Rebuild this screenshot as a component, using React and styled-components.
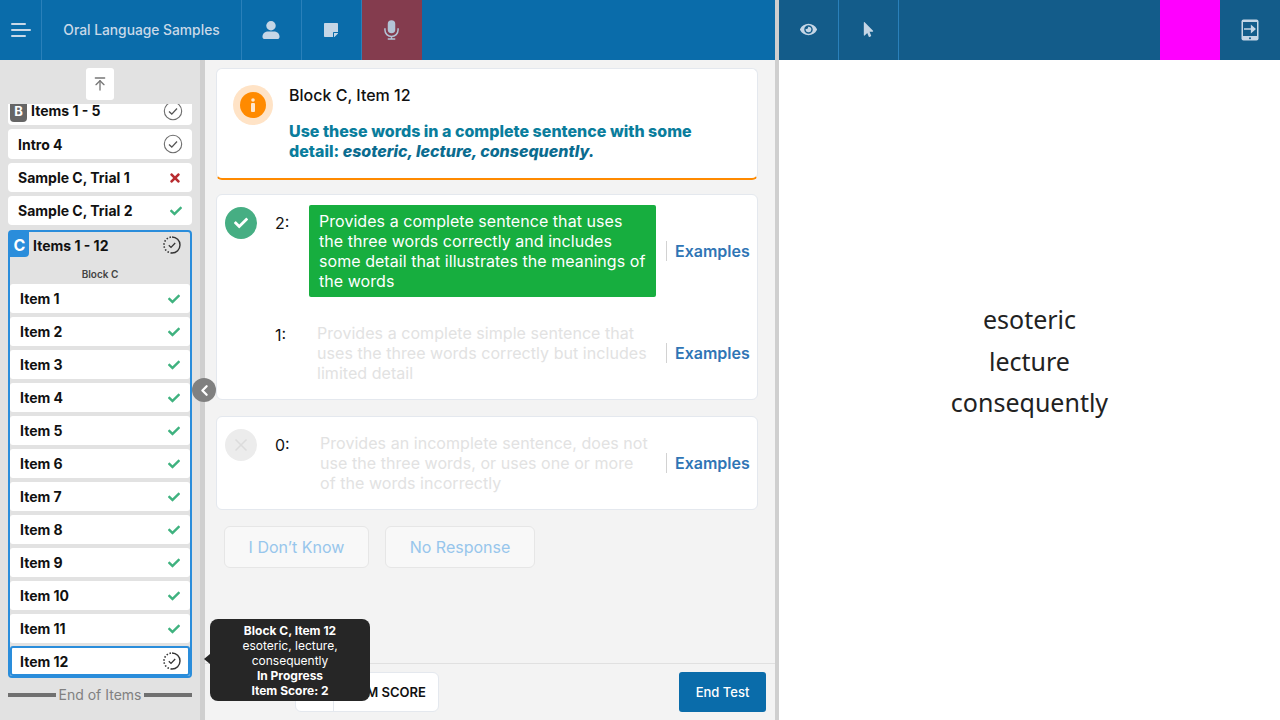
import styled, { createGlobalStyle } from "styled-components";
import { FaEye, FaMousePointer, FaStickyNote, FaCheck, FaTimes } from "react-icons/fa";
import { LuArrowUpToLine, LuChevronLeft, LuX } from "react-icons/lu";

const GlobalStyle = createGlobalStyle`
  html, body {
    margin: 0;
    height: 100%;
    overflow: hidden;
    font-family: "Inter", "Liberation Sans", sans-serif;
  }
  * { box-sizing: border-box; }
`;

const items = ["Item 1", "Item 2", "Item 3", "Item 4", "Item 5", "Item 6", "Item 7", "Item 8", "Item 9", "Item 10", "Item 11"];

const MenuIcon = () => (
  <svg width="20" height="14" viewBox="0 0 20 14" fill="#c9d9e8">
    <rect x="0" y="0" width="15" height="2" rx="1" />
    <rect x="0" y="6" width="20" height="2" rx="1" />
    <rect x="0" y="12" width="15" height="2" rx="1" />
  </svg>
);

const UserIcon = () => (
  <svg width="18" height="18" viewBox="0 0 18 19" fill="#c5d6e6">
    <circle cx="9" cy="5" r="5" />
    <path d="M0 16.5C0 13 3 11 6 11h6c3 0 6 2 6 5.500c0 1.500-1 2.500-2.500 2.500h-13C1 19 0 18 0 16.500z" />
  </svg>
);

const MicIcon = () => (
  <svg width="15" height="20" viewBox="0 0 16 21" fill="none" stroke="#b3c4d6" strokeWidth="1.6">
    <rect x="4" y="0" width="8" height="14" rx="4" fill="#b3c4d6" stroke="none" />
    <path d="M1 8.500v2a7 7 0 0 0 14 0v-2M8 17.500V20M4 20.200h8" />
  </svg>
);

const TabletIcon = () => (
  <svg width="18" height="22" viewBox="0 0 18 22">
    <rect x="0.500" y="0.500" width="17" height="21" rx="2" fill="#c5d6e6" />
    <rect x="2" y="3" width="14" height="14" fill="#135c8a" />
    <circle cx="9" cy="19.300" r="1" fill="#135c8a" />
    <path d="M3 10h10M10.500 7l3.500 3-3.500 3z" stroke="#c5d6e6" strokeWidth="1.300" fill="#c5d6e6" />
  </svg>
);

const InfoGlyph = () => (
  <svg width="6" height="14" viewBox="0 0 6 14" fill="#ffe6cc">
    <circle cx="3" cy="2" r="1.800" />
    <rect x="1" y="5" width="4" height="9" rx="1" />
  </svg>
);

const DoneIcon = () => (
  <svg width="20" height="20" viewBox="0 0 20 20" fill="none">
    <circle cx="10" cy="10" r="8.700" stroke="#6d6d6d" strokeWidth="1.100" />
    <path d="M6 10.500l2.800 2.600L14 7.500" stroke="#555" strokeWidth="1.300" />
  </svg>
);

const ProgressIcon = () => (
  <svg width="18" height="18" viewBox="0 0 18 18" fill="none">
    <path d="M9 1a8 8 0 0 1 0 16" stroke="#333" strokeWidth="1.400" />
    <path d="M9 17a8 8 0 0 1 0-16" stroke="#333" strokeWidth="1.600" strokeDasharray="1.500 1.700" />
    <path d="M5.800 9.300l2.200 2.100 4.200-4.400" stroke="#333" strokeWidth="1.300" />
  </svg>
);

const Status = ({ kind }) => {
  if (kind === "done") return <DoneIcon />;
  if (kind === "progress") return <ProgressIcon />;
  if (kind === "wrong") return <WrongMark><FaTimes /></WrongMark>;
  return <RightMark><FaCheck /></RightMark>;
};

const App = () => (
  <>
    <GlobalStyle />
    <Page>
      <LeftPane>
        <TopBar>
          <BarCell $width={42}><MenuIcon /></BarCell>
          <TitleCell>Oral Language Samples</TitleCell>
          <BarCell $width={60}><UserIcon /></BarCell>
          <BarCell $width={60}><FaStickyNote size={16} color="#c5d6e6" /></BarCell>
          <MicCell><MicIcon /></MicCell>
        </TopBar>
        <Body>
          <Sidebar>
            <ToTop><LuArrowUpToLine size={16} color="#777" /></ToTop>
            <ListClip>
              <BlockRow>
                <BlockBadge>B</BlockBadge>
                <span>Items 1 - 5</span>
                <StatusSlot><Status kind="done" /></StatusSlot>
              </BlockRow>
              <Row $height={30}>Intro 4<StatusSlot><Status kind="done" /></StatusSlot></Row>
              <Row>Sample C, Trial 1<StatusSlot><Status kind="wrong" /></StatusSlot></Row>
              <Row>Sample C, Trial 2<StatusSlot><Status kind="right" /></StatusSlot></Row>
              <Group>
                <GroupHead>
                  <GroupBadge>C</GroupBadge>
                  <span>Items 1 - 12</span>
                  <StatusSlot><Status kind="progress" /></StatusSlot>
                </GroupHead>
                <GroupLabel>Block C</GroupLabel>
                {items.map((name) => (
                  <ItemRow key={name}>{name}<StatusSlot><Status kind="right" /></StatusSlot></ItemRow>
                ))}
                <ItemRow $active>Item 12<StatusSlot $right={7}><Status kind="progress" /></StatusSlot></ItemRow>
              </Group>
            </ListClip>
            <EndOfItems>End of Items</EndOfItems>
          </Sidebar>
          <Main>
            <Scroll>
              <PromptCard>
                <InfoHalo><InfoDot><InfoGlyph /></InfoDot></InfoHalo>
                <div>
                  <PromptTitle>Block C, Item 12</PromptTitle>
                  <PromptText>
                    Use these words in a complete sentence with some detail: <em>esoteric, lecture, consequently.</em>
                  </PromptText>
                </div>
              </PromptCard>
              <ScoreCard>
                <ScoreRow>
                  <ScoreDot $on><FaCheck size={14} color="#fff" /></ScoreDot>
                  <ScoreNum>2:</ScoreNum>
                  <Criterion $selected>
                    Provides a complete sentence that uses the three words correctly and includes some detail that illustrates the meanings of the words
                  </Criterion>
                  <Examples>Examples</Examples>
                </ScoreRow>
                <ScoreRow $gap={20}>
                  <DotSpace />
                  <ScoreNum>1:</ScoreNum>
                  <Criterion $indent={8}>
                    Provides a complete simple sentence that uses the three words correctly but includes limited detail
                  </Criterion>
                  <Examples>Examples</Examples>
                </ScoreRow>
              </ScoreCard>
              <ScoreCard>
                <ScoreRow>
                  <ScoreDot><LuX size={20} color="#dcdcdc" /></ScoreDot>
                  <ScoreNum>0:</ScoreNum>
                  <Criterion $indent={11}>
                    Provides an incomplete sentence, does not use the three words, or uses one or more of the words incorrectly
                  </Criterion>
                  <Examples>Examples</Examples>
                </ScoreRow>
              </ScoreCard>
              <GhostButtons>
                <GhostButton $width={145}>I Don’t Know</GhostButton>
                <GhostButton $width={150}>No Response</GhostButton>
              </GhostButtons>
            </Scroll>
            <Footer>
              <ScoreBox>
                <ScoreValue />
                <ScoreName>ITEM SCORE</ScoreName>
              </ScoreBox>
              <EndTest>End Test</EndTest>
            </Footer>
          </Main>
          <Collapse><LuChevronLeft size={17} strokeWidth={3.2} color="#fff" /></Collapse>
          <Tooltip>
            <b>Block C, Item 12</b>
            <br />
            esoteric, lecture,
            <br />
            consequently
            <br />
            <b>In Progress</b>
            <br />
            <b>Item Score: 2</b>
          </Tooltip>
        </Body>
      </LeftPane>
      <RightPane>
        <RightBar>
          <RightCell><FaEye size={17} color="#c5d6e6" /></RightCell>
          <RightCell><FaMousePointer size={15} color="#c5d6e6" /></RightCell>
          <Spring />
          <Swatch />
          <TabletCell><TabletIcon /></TabletCell>
        </RightBar>
        <Words>
          <div>esoteric</div>
          <div>lecture</div>
          <div>consequently</div>
        </Words>
      </RightPane>
    </Page>
  </>
);

const Page = styled.div`
  display: flex;
  width: 1280px;
  height: 720px;
  background: #fff;
`;

const LeftPane = styled.div`
  flex: none;
  width: 775px;
  display: flex;
  flex-direction: column;
`;

const TopBar = styled.div`
  display: flex;
  height: 60px;
  background: #0a6caa;
`;

const BarCell = styled.div`
  width: ${(p) => p.$width}px;
  display: flex;
  align-items: center;
  justify-content: center;
  padding-right: ${(p) => (p.$width > 42 ? 1 : 0)}px;
  border-right: 1px solid #2a80ba;
`;

const TitleCell = styled.div`
  width: 200px;
  display: flex;
  align-items: center;
  justify-content: center;
  color: #c9d9e8;
  font-size: 13.800px;
  font-weight: 500;
  border-right: 1px solid #2a80ba;
`;

const MicCell = styled.div`
  width: 60px;
  display: flex;
  align-items: center;
  justify-content: center;
  padding-right: 1px;
  background: #843c4e;
`;

const Body = styled.div`
  position: relative;
  flex: 1;
  display: flex;
  min-height: 0;
`;

const Sidebar = styled.div`
  flex: none;
  width: 205px;
  padding: 8px 8px 0 8px;
  background: #e2e2e2;
  border-right: 5px solid #cfcfcf;
  display: flex;
  flex-direction: column;
`;

const ToTop = styled.div`
  align-self: center;
  flex: none;
  width: 28px;
  height: 32px;
  display: flex;
  align-items: center;
  justify-content: center;
  background: #fff;
  border-radius: 3px;
`;

const ListClip = styled.div`
  height: 574px;
  margin-top: 4px;
  overflow: hidden;
  display: flex;
  flex-direction: column;
  gap: 4px;
`;

const Row = styled.div`
  position: relative;
  flex: none;
  height: ${(p) => p.$height || 29}px;
  display: flex;
  align-items: center;
  padding-left: 10px;
  background: #fff;
  border-radius: 4px;
  color: #111;
  font-size: 14px;
  font-weight: 700;
`;

const BlockRow = styled(Row)`
  margin-top: -8px;
  padding-left: 23px;
`;

const BlockBadge = styled.div`
  position: absolute;
  left: 2px;
  top: 0;
  width: 17px;
  height: 26px;
  padding-top: 3px;
  display: flex;
  align-items: center;
  justify-content: center;
  background: #666;
  border-radius: 0 0 4px 4px;
  color: #fff;
  font-size: 13px;
  font-weight: 700;
`;

const StatusSlot = styled.div`
  position: absolute;
  right: ${(p) => p.$right ?? 9}px;
  top: 50%;
  transform: translateY(-50%);
  display: flex;
`;

const RightMark = styled.span`
  display: flex;
  margin-right: 1px;
  color: #3fb27f;
  font-size: 12px;
`;

const WrongMark = styled.span`
  display: flex;
  margin-right: 1px;
  color: #b82c30;
  font-size: 14px;
`;

const Group = styled.div`
  flex: none;
  margin-top: 1px;
  height: 448px;
  border: 2px solid #2a8ddb;
  border-radius: 4px;
`;

const GroupHead = styled.div`
  position: relative;
  height: 26px;
  display: flex;
  align-items: center;
  padding-left: 23px;
  color: #111;
  font-size: 14px;
  font-weight: 700;
`;

const GroupBadge = styled.div`
  position: absolute;
  left: 0;
  top: 0;
  width: 19px;
  height: 25px;
  display: flex;
  align-items: center;
  justify-content: center;
  background: #2a8ddb;
  border-radius: 0 0 4px 0;
  color: #fff;
  font-size: 16px;
  font-weight: 700;
`;

const GroupLabel = styled.div`
  height: 26px;
  padding-top: 10px;
  text-align: center;
  color: #444;
  font-size: 10px;
  font-weight: 600;
`;

const ItemRow = styled.div`
  position: relative;
  height: ${(p) => (p.$active ? 30 : 29)}px;
  margin-bottom: 4px;
  margin-top: ${(p) => (p.$active ? -1 : 0)}px;
  display: flex;
  align-items: center;
  padding-left: ${(p) => (p.$active ? 8 : 10)}px;
  background: #fff;
  border: ${(p) => (p.$active ? "2px solid #2a8ddb" : "none")};
  border-radius: 3px;
  color: #111;
  font-size: 14px;
  font-weight: 700;
`;

const EndOfItems = styled.div`
  margin-top: 8px;
  display: flex;
  align-items: center;
  gap: 3px;
  color: #808080;
  font-size: 14px;
  white-space: nowrap;
  &::before, &::after {
    content: "";
    flex: 1;
    height: 4px;
    background: #707070;
  }
`;

const Main = styled.div`
  flex: 1;
  min-width: 0;
  display: flex;
  flex-direction: column;
  background: #f3f3f3;
`;

const Scroll = styled.div`
  flex: 1;
  padding: 8px 17px 0 11px;
`;

const PromptCard = styled.div`
  height: 112px;
  display: flex;
  gap: 16px;
  padding: 16px 48px 0 16px;
  background: #fff;
  border: 1px solid #e4e8ee;
  border-bottom: 2px solid #ff8a00;
  border-radius: 6px;
`;

const InfoHalo = styled.div`
  flex: none;
  width: 40px;
  height: 40px;
  display: flex;
  align-items: center;
  justify-content: center;
  background: #ffe3c6;
  border-radius: 50%;
`;

const InfoDot = styled.div`
  width: 26px;
  height: 26px;
  display: flex;
  align-items: center;
  justify-content: center;
  background: #ff8a00;
  border-radius: 50%;
`;

const PromptTitle = styled.div`
  color: #111;
  font-size: 16px;
  font-weight: 500;
  line-height: 20px;
`;

const PromptText = styled.div`
  margin-top: 16px;
  color: #0a7d9c;
  font-size: 16px;
  font-weight: 800;
  line-height: 20px;
  em { color: #0b6c8f; }
`;

const ScoreCard = styled.div`
  margin-top: 14px;
  padding: 10px 8px;
  background: #fff;
  border: 1px solid #e4e8ee;
  border-radius: 6px;
  & + & { margin-top: 16px; }
`;

const ScoreRow = styled.div`
  display: flex;
  align-items: flex-start;
  margin-top: ${(p) => p.$gap || 0}px;
`;

const ScoreDot = styled.div`
  flex: none;
  width: 32px;
  height: 32px;
  margin-top: 2px;
  display: flex;
  align-items: center;
  justify-content: center;
  background: ${(p) => (p.$on ? "#46ae83" : "#ececec")};
  border-radius: 50%;
`;

const DotSpace = styled.div`
  flex: none;
  width: 32px;
`;

const ScoreNum = styled.div`
  flex: none;
  width: 34px;
  margin-left: 18px;
  margin-top: 8px;
  color: #111;
  font-size: 16px;
  line-height: 20px;
`;

const Criterion = styled.div`
  flex: none;
  width: ${(p) => 347 - (p.$indent || 0)}px;
  margin-left: ${(p) => p.$indent || 0}px;
  padding: 6px 8px 6px ${(p) => (p.$selected ? 10 : 0)}px;
  background: ${(p) => (p.$selected ? "#17ae3f" : "transparent")};
  border-radius: 2px;
  color: ${(p) => (p.$selected ? "#fff" : "#e2e2e2")};
  font-size: 16px;
  letter-spacing: 0.050px;
  line-height: 20px;
`;

const Examples = styled.div`
  align-self: center;
  flex: none;
  margin-left: 10px;
  padding-left: 8px;
  border-left: 1px solid #d2d2d2;
  color: #2f75b5;
  font-size: 16px;
  font-weight: 600;
  line-height: 20px;
`;

const GhostButtons = styled.div`
  display: flex;
  gap: 16px;
  margin: 16px 0 0 8px;
`;

const GhostButton = styled.div`
  width: ${(p) => p.$width}px;
  height: 42px;
  display: flex;
  align-items: center;
  justify-content: center;
  background: #f8f8f8;
  border: 1px solid #e6e6e6;
  border-radius: 6px;
  color: #97c6ec;
  font-size: 16px;
`;

const Footer = styled.div`
  flex: none;
  height: 57px;
  display: flex;
  align-items: flex-start;
  justify-content: space-between;
  padding: 8px 9px 0 90px;
  border-top: 1px solid #e0e0e0;
`;

const ScoreBox = styled.div`
  width: 144px;
  height: 40px;
  display: flex;
  background: #fff;
  border: 1px solid #e4e8ee;
  border-radius: 6px;
`;

const ScoreValue = styled.div`
  width: 38px;
  border-right: 1px solid #e4e8ee;
`;

const ScoreName = styled.div`
  flex: 1;
  display: flex;
  align-items: center;
  justify-content: center;
  color: #111;
  font-size: 13px;
  font-weight: 600;
`;

const EndTest = styled.div`
  width: 87px;
  height: 40px;
  display: flex;
  align-items: center;
  justify-content: center;
  background: #0a6caa;
  border-radius: 3px;
  color: #fff;
  font-size: 13px;
  font-weight: 500;
`;

const Collapse = styled.div`
  position: absolute;
  left: 192px;
  top: 318px;
  width: 24px;
  height: 24px;
  display: flex;
  align-items: center;
  justify-content: center;
  background: #808080;
  border-radius: 50%;
`;

const Tooltip = styled.div`
  position: absolute;
  left: 210px;
  top: 559px;
  width: 160px;
  height: 82px;
  padding: 4px 8px;
  background: #262626;
  border-radius: 8px;
  color: #fff;
  font-size: 12px;
  line-height: 15px;
  text-align: center;
  &::before {
    content: "";
    position: absolute;
    left: -6px;
    top: 35px;
    border-style: solid;
    border-width: 5px 6px 5px 0;
    border-color: transparent #262626 transparent transparent;
  }
`;

const RightPane = styled.div`
  flex: 1;
  display: flex;
  flex-direction: column;
  border-left: 4px solid #cfcfcf;
`;

const RightBar = styled.div`
  flex: none;
  display: flex;
  height: 60px;
  background: #135c8a;
`;

const RightCell = styled.div`
  width: 60px;
  display: flex;
  align-items: center;
  justify-content: center;
  padding-bottom: 1px;
  border-right: 1px solid #2a80ba;
`;

const Spring = styled.div`
  flex: 1;
`;

const Swatch = styled.div`
  width: 60px;
  background: #ff00ff;
`;

const TabletCell = styled.div`
  width: 60px;
  display: flex;
  align-items: center;
  justify-content: center;
  padding-right: 1px;
`;

const Words = styled.div`
  padding-top: 239px;
  text-align: center;
  color: #222;
  font-family: "Noto Sans", "Liberation Sans", sans-serif;
  font-size: 25px;
  line-height: 41.600px;
`;

export default App;
